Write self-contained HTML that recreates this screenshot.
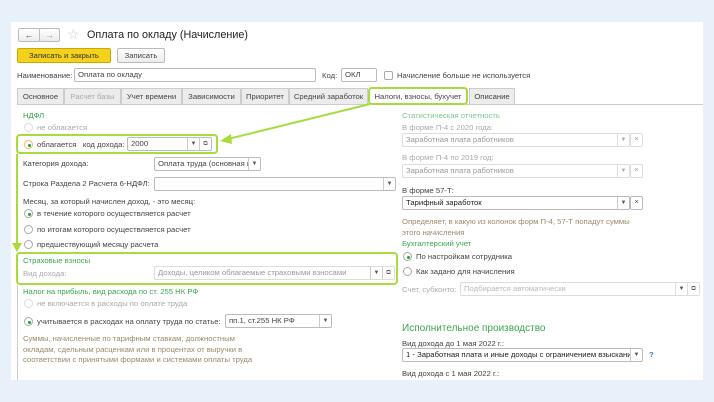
<!DOCTYPE html>
<html><head><meta charset="utf-8"><style>
*{margin:0;padding:0;box-sizing:border-box}
body{width:714px;height:402px;background:#e8f1fa;font-family:"Liberation Sans",sans-serif;font-size:7.7px;color:#444;position:relative;overflow:hidden}
.a{position:absolute;white-space:nowrap}
.panel{position:absolute;left:11px;top:22px;width:692px;height:358px;background:#fff}
.btn{position:absolute;border:1px solid #bbb;border-radius:2px;background:linear-gradient(#fff,#ececec);text-align:center;line-height:13px;white-space:nowrap}
.in{position:absolute;border:1px solid #bbb;border-radius:2px;background:#fff;padding-left:3px;line-height:12px;overflow:hidden;white-space:nowrap}
.dis{border-color:#ddd;color:#999}
.dd{position:absolute;top:0;bottom:0;width:12px;border-left:1px solid #ccc;text-align:center;font-size:6px;line-height:12px;color:#555;background:#fff}
.g{color:#3aa84a}
.lg{color:#7cc98a}
.gr{color:#aaa}
.tan{color:#9a8a6a}
.r{position:absolute;width:9px;height:9px;border:1px solid #aaa;border-radius:50%;background:#fff}
.r.on::after{content:"";position:absolute;left:2.5px;top:2.5px;width:3px;height:3px;border-radius:50%;background:#2a9a3a}
.r.d{border-color:#ddd}
.tab{position:absolute;top:88px;height:16px;border:1px solid #ccc;border-bottom:none;background:#ececec;text-align:center;line-height:15px;color:#444;white-space:nowrap;overflow:hidden}
.hl{position:absolute;border:2px solid #a6dc3c;border-radius:4px}
</style></head><body>
<div class="panel"></div>
<div class="btn" style="left:18px;top:28px;width:22px;height:14px;font-size:9px">←</div>
<div class="btn" style="left:39px;top:28px;width:21px;height:14px;color:#999;font-size:9px">→</div>
<div class="a" style="left:67px;top:26px;font-size:14px;color:#ccc">☆</div>
<div class="a" style="left:87px;top:29px;font-size:10.8px;color:#222">Оплата по окладу (Начисление)</div>
<div class="btn" style="left:17px;top:48px;width:94px;height:15px;background:#f4d11c;border-color:#c9a800;color:#333">Записать и закрыть</div>
<div class="btn" style="left:117px;top:48px;width:48px;height:15px">Записать</div>
<div class="a" style="left:17px;top:71px">Наименование:</div>
<div class="in" style="left:74px;top:68px;width:242px;height:14px">Оплата по окладу</div>
<div class="a" style="left:322px;top:71px">Код:</div>
<div class="in" style="left:341px;top:68px;width:36px;height:14px">ОКЛ</div>
<div class="a" style="left:384px;top:71px;width:9px;height:9px;border:1px solid #aaa;border-radius:2px"></div>
<div class="a" style="left:397px;top:71px">Начисление больше не используется</div>
<div class="a" style="left:17px;top:104px;width:686px;height:1px;background:#ccc"></div>
<div class="tab" style="left:17px;width:47px">Основное</div>
<div class="tab" style="left:64px;width:57px;color:#aaa">Расчет базы</div>
<div class="tab" style="left:121px;width:61px">Учет времени</div>
<div class="tab" style="left:182px;width:59px">Зависимости</div>
<div class="tab" style="left:241px;width:48px">Приоритет</div>
<div class="tab" style="left:289px;width:79px">Средний заработок</div>
<div class="tab" style="left:369px;width:98px;background:#fff;height:17px">Налоги, взносы, бухучет</div>
<div class="tab" style="left:469px;width:46px">Описание</div>
<div class="hl" style="left:368px;top:87px;width:100px;height:18px"></div>

<div class="a g" style="left:23px;top:111px">НДФЛ</div>
<div class="r d" style="left:24px;top:123px"></div><div class="a gr" style="left:37px;top:123px">не облагается</div>
<div class="hl" style="left:16px;top:134px;width:202px;height:20px"></div>
<div class="r on" style="left:24px;top:140px;border-color:#e8c060"></div>
<div class="a" style="left:37px;top:140px">облагается &nbsp; код дохода:</div>
<div class="in" style="left:127px;top:137px;width:85px;height:14px">2000<div class="dd" style="right:12px">▼</div><div class="dd" style="right:0">⧉</div></div>
<div class="a" style="left:23px;top:159px">Категория дохода:</div>
<div class="in" style="left:154px;top:157px;width:107px;height:14px">Оплата труда (основная н<div class="dd" style="right:0">▼</div></div>
<div class="a" style="left:23px;top:179px">Строка Раздела 2 Расчета 6-НДФЛ:</div>
<div class="in" style="left:154px;top:177px;width:242px;height:14px"><div class="dd" style="right:0">▼</div></div>
<div class="a" style="left:23px;top:197px">Месяц, за который начислен доход, - это месяц:</div>
<div class="r on" style="left:24px;top:209px"></div><div class="a" style="left:37px;top:209px">в течение которого осуществляется расчет</div>
<div class="r" style="left:24px;top:225px"></div><div class="a" style="left:37px;top:225px">по итогам которого осуществляется расчет</div>
<div class="r" style="left:24px;top:240px"></div><div class="a" style="left:37px;top:240px">предшествующий месяцу расчета</div>
<div class="hl" style="left:16px;top:252px;width:382px;height:33px"></div>
<div class="a g" style="left:23px;top:256px">Страховые взносы</div>
<div class="a gr" style="left:23px;top:269px">Вид дохода:</div>
<div class="in dis" style="left:154px;top:266px;width:241px;height:14px">Доходы, целиком облагаемые страховыми взносами<div class="dd" style="right:12px">▼</div><div class="dd" style="right:0">⧉</div></div>
<div class="a" style="left:17px;top:285px;width:1px;height:95px;background:#ccc"></div>
<div class="a g" style="left:23px;top:287px">Налог на прибыль, вид расхода по ст. 255 НК РФ</div>
<div class="r d" style="left:24px;top:299px"></div><div class="a gr" style="left:37px;top:299px">не включается в расходы по оплате труда</div>
<div class="r on" style="left:24px;top:317px"></div><div class="a" style="left:37px;top:317px">учитывается в расходах на оплату труда по статье:</div>
<div class="in" style="left:225px;top:314px;width:107px;height:14px">пп.1, ст.255 НК РФ<div class="dd" style="right:0">▼</div></div>
<div class="a tan" style="left:23px;top:334px;line-height:10.5px">Суммы, начисленные по тарифным ставкам, должностным<br>окладам, сдельным расценкам или в процентах от выручки в<br>соответствии с принятыми формами и системами оплаты труда</div>

<svg class="a" style="left:0;top:0" width="714" height="402"><g stroke="#a6dc3c" stroke-width="2" fill="#a6dc3c">
<line x1="370" y1="104" x2="228" y2="139"/><polygon points="220,141 231,134 232,144" stroke="none"/>
<line x1="17" y1="154" x2="17" y2="244"/><polygon points="12,243 22,243 17,252" stroke="none"/></g></svg>

<div class="a lg" style="left:402px;top:111px">Статистическая отчетность</div>
<div class="a gr" style="left:402px;top:123px">В форме П-4 с 2020 года:</div>
<div class="in dis" style="left:402px;top:133px;width:228px;height:14px">Заработная плата работников<div class="dd" style="right:0;border-color:#ddd;color:#aaa">▼</div></div>
<div class="in dis" style="left:630px;top:133px;width:13px;height:14px;padding:0;text-align:center;font-size:7px">×</div>
<div class="a gr" style="left:402px;top:153px">В форме П-4 по 2019 год:</div>
<div class="in dis" style="left:402px;top:164px;width:228px;height:14px">Заработная плата работников<div class="dd" style="right:0;border-color:#ddd;color:#aaa">▼</div></div>
<div class="in dis" style="left:630px;top:164px;width:13px;height:14px;padding:0;text-align:center;font-size:7px">×</div>
<div class="a" style="left:402px;top:186px">В форме 57-Т:</div>
<div class="in" style="left:402px;top:196px;width:228px;height:14px;color:#222">Тарифный заработок<div class="dd" style="right:0">▼</div></div>
<div class="in" style="left:630px;top:196px;width:13px;height:14px;padding:0;text-align:center;font-size:7px">×</div>
<div class="a tan" style="left:402px;top:217px;line-height:10.5px">Определяет, в какую из колонок форм П-4, 57-Т попадут суммы<br>этого начисления</div>
<div class="a g" style="left:402px;top:239px">Бухгалтерский учет</div>
<div class="r on" style="left:403px;top:252px"></div><div class="a" style="left:416px;top:252px">По настройкам сотрудника</div>
<div class="r" style="left:403px;top:267px"></div><div class="a" style="left:416px;top:267px">Как задано для начисления</div>
<div class="a gr" style="left:402px;top:285px">Счет, субконто:</div>
<div class="in dis" style="left:460px;top:282px;width:240px;height:14px;color:#bbb">Подбирается автоматически<div class="dd" style="right:12px;border-color:#ddd">▼</div><div class="dd" style="right:0;border-color:#ddd">⧉</div></div>
<div class="a g" style="left:402px;top:323px;font-size:10px">Исполнительное производство</div>
<div class="a" style="left:402px;top:339px">Вид дохода до 1 мая 2022 г.:</div>
<div class="in" style="left:402px;top:348px;width:241px;height:14px;color:#222">1 - Заработная плата и иные доходы с ограничением взыскания<div class="dd" style="right:0">▼</div></div>
<div class="a" style="left:649px;top:350px;color:#3a7acc;font-weight:bold">?</div>
<div class="a" style="left:402px;top:369px">Вид дохода с 1 мая 2022 г.:</div>
<div class="a" style="left:0;top:380px;width:714px;height:22px;background:#e8f1fa"></div>
</body></html>
